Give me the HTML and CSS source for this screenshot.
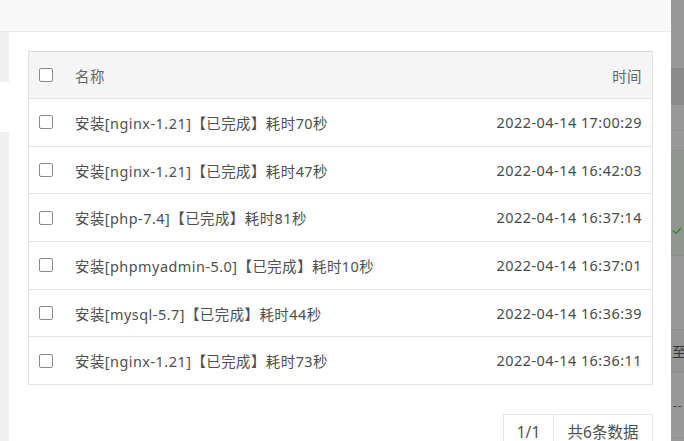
FILE: index.html
```html
<!DOCTYPE html>
<html lang="zh-CN">
<head>
<meta charset="utf-8">
<title>任务列表</title>
<link rel="stylesheet" href="styles.css">
</head>
<body>
<div class="modal">
  <div class="modal-head"></div>
  <div class="modal-body">
    <div class="side">
      <div class="side-item"></div>
      <div class="side-item active"></div>
      <div class="side-rest"></div>
    </div>
    <div class="main">
      <table class="task-table">
        <thead>
          <tr>
            <th class="c-check"><span class="cb"></span></th>
            <th class="c-name">名称</th>
            <th class="c-time">时间</th>
          </tr>
        </thead>
        <tbody>
          <tr><td class="c-check"><span class="cb"></span></td><td class="c-name">安装[nginx-1.21]【已完成】耗时70秒</td><td class="c-time">2022-04-14 17:00:29</td></tr>
          <tr><td class="c-check"><span class="cb"></span></td><td class="c-name">安装[nginx-1.21]【已完成】耗时47秒</td><td class="c-time">2022-04-14 16:42:03</td></tr>
          <tr><td class="c-check"><span class="cb"></span></td><td class="c-name">安装[php-7.4]【已完成】耗时81秒</td><td class="c-time">2022-04-14 16:37:14</td></tr>
          <tr><td class="c-check"><span class="cb"></span></td><td class="c-name">安装[phpmyadmin-5.0]【已完成】耗时10秒</td><td class="c-time">2022-04-14 16:37:01</td></tr>
          <tr><td class="c-check"><span class="cb"></span></td><td class="c-name">安装[mysql-5.7]【已完成】耗时44秒</td><td class="c-time">2022-04-14 16:36:39</td></tr>
          <tr><td class="c-check"><span class="cb"></span></td><td class="c-name">安装[nginx-1.21]【已完成】耗时73秒</td><td class="c-time">2022-04-14 16:36:11</td></tr>
        </tbody>
      </table>
      <div class="pager">
        <span class="pg-cell pg-num">1/1</span>
        <span class="pg-cell pg-total">共6条数据</span>
      </div>
    </div>
  </div>
</div>
<div class="backdrop">
  <div class="bd bd-a"></div>
  <div class="bd bd-b"></div>
  <div class="bd bd-c"></div>
  <div class="bd bd-d"></div>
  <div class="bd bd-e"><svg class="chk" width="10" height="8" viewBox="0 0 10 8"><polyline points="1,3.5 4,6.5 9,1" fill="none" stroke="#2f8a3a" stroke-width="1.4"/></svg></div>
  <div class="bd bd-f"></div>
  <div class="bd bd-g"><span class="bd-text">至</span></div>
  <div class="bd bd-h"><span class="bd-dash">--</span></div>
  <div class="bd bd-i"></div>
</div>
</body>
</html>
```

FILE: styles.css
```css
html, body {
  margin: 0;
  padding: 0;
}
body {
  width: 684px;
  height: 441px;
  overflow: hidden;
  display: flex;
  font-family: "Noto Sans", "Noto Sans CJK SC", sans-serif;
  color: #555;
  background: #999;
}
.modal {
  width: 671px;
  flex: none;
  background: #fff;
  display: flex;
  flex-direction: column;
}
.modal-head {
  height: 31px;
  background: #f8f8f8;
  border-bottom: 1px solid #eaeaea;
  flex: none;
}
.modal-body {
  flex: 1;
  display: flex;
  min-height: 0;
}
.side {
  width: 9px;
  flex: none;
  display: flex;
  flex-direction: column;
}
.side-item {
  height: 50px;
  background: #f0f0f0;
}
.side-item.active {
  background: #fff;
}
.side-rest {
  flex: 1;
  background: #f0f0f0;
}
.main {
  flex: 1;
  padding: 19px 18px 0 19px;
}
.task-table {
  width: 100%;
  border-collapse: collapse;
  border: 1px solid #e2e2e2;
  border-top-color: #d9d9d9;
  font-size: 14.4px;
  letter-spacing: 0.5px;
}
.task-table th,
.task-table td {
  padding: 0;
  font-weight: normal;
  text-align: left;
  border-bottom: 1px solid #e4e4e4;
  white-space: nowrap;
}
.task-table thead tr {
  height: 47px;
  background: #f5f5f5;
  color: #666;
}
.task-table tbody tr {
  height: 47.7px;
}
.c-check {
  width: 36px;
  padding-left: 10px !important;
  line-height: 0;
}
.c-name {
  color: #4f4f4f;
}
.c-time {
  text-align: right !important;
  padding-right: 10px !important;
  color: #4a4a4a;
}
thead .c-name,
thead .c-time {
  color: #666;
}
.cb {
  display: inline-block;
  width: 12px;
  height: 12px;
  border: 1px solid #8a8a8a;
  border-radius: 2px;
  background: #fff;
  vertical-align: middle;
}
.pager {
  display: flex;
  justify-content: flex-end;
  margin-top: 29px;
}
.pg-cell {
  height: 36px;
  line-height: 35px;
  border: 1px solid #e6e6e6;
  font-size: 15.5px;
  color: #4f4f4f;
  text-align: center;
}
.pg-num {
  width: 49px;
}
.pg-total {
  width: 98px;
  border-left: none;
}
.backdrop {
  flex: 1;
  display: flex;
  flex-direction: column;
  overflow: hidden;
  background: #999;
}
.bd {
  flex: none;
  position: relative;
  overflow: hidden;
}
.bd-a { height: 68px; }
.bd-b { height: 37px; background: #8c8c8c; }
.bd-c { height: 25px; border-bottom: 1px solid #8f8f8f; }
.bd-d { height: 19px; border-bottom: 1px solid #8f8f8f; }
.bd-e { height: 104px; background: #939690; border-bottom: 1px solid #8f8f8f; }
.bd-f { height: 73px; border-bottom: 1px solid #8f8f8f; }
.bd-g { height: 42px; background: #959595; border-bottom: 1px solid #8f8f8f; display: flex; align-items: center; }
.bd-h { height: 64px; border-bottom: 1px solid #8f8f8f; display: flex; align-items: center; }
.bd-i { flex: 1; }
.chk {
  position: absolute;
  left: 1px;
  top: 76px;
}
.bd-text {
  margin-left: 1px;
  font-size: 14px;
  color: #333;
  white-space: nowrap;
  font-family: "Noto Sans CJK SC", sans-serif;
}
.bd-dash {
  margin-left: 2px;
  font-size: 12px;
  color: #444;
  letter-spacing: 1px;
}
```
